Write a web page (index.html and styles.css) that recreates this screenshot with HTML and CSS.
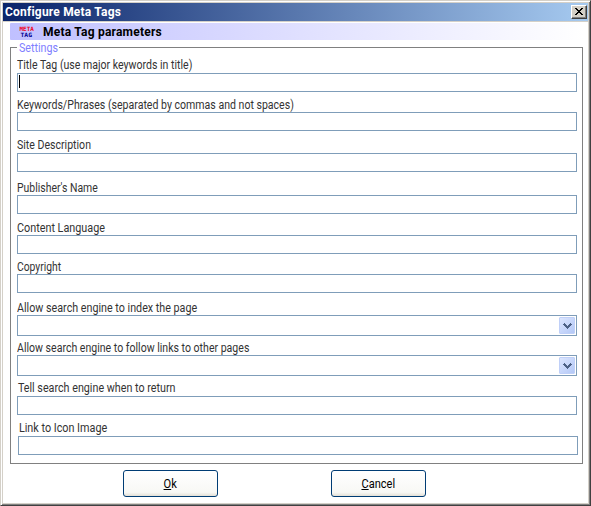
FILE: index.html
```
<!DOCTYPE html>
<html lang="en">
<head>
<meta charset="utf-8">
<title>Configure Meta Tags</title>
<link rel="stylesheet" href="styles.css">
</head>
<body>
<div class="window">
  <header class="titlebar">
    <span class="caption">Configure Meta Tags</span>
    <button class="close" aria-label="Close"><svg width="8" height="7" viewBox="0 0 8 7" shape-rendering="crispEdges"><path d="M0 0h2v1h1v1h2V1h1V0h2v1H7v1H6v1H5v1h1v1h1v1h1v1H6V6H5V5H3v1H2v1H0V6h1V5h1V4h1V3H2V2H1V1H0z"/></svg></button>
  </header>
  <div class="banner">
    <svg class="logo" width="16" height="12" viewBox="0 0 16 12">
      <text x="0.5" y="5" textLength="14.5" lengthAdjust="spacingAndGlyphs" fill="#f00018">META</text>
      <text x="1.5" y="11" textLength="11.5" lengthAdjust="spacingAndGlyphs" fill="#000090">TAG</text>
    </svg>
    <span class="heading">Meta Tag parameters</span>
  </div>
  <fieldset class="settings">
    <legend><span>Settings</span></legend>
    <div class="row title"><label>Title Tag (use major keywords in title)</label><div class="field"><i class="caret"></i></div></div>
    <div class="row keywords"><label>Keywords/Phrases (separated by commas and not spaces)</label><div class="field"></div></div>
    <div class="row description"><label>Site Description</label><div class="field"></div></div>
    <div class="row publisher"><label>Publisher's Name</label><div class="field"></div></div>
    <div class="row language"><label>Content Language</label><div class="field"></div></div>
    <div class="row copyright"><label>Copyright</label><div class="field"></div></div>
    <div class="row index"><label>Allow search engine to index the page</label><div class="field combo"><span class="drop"><svg width="9" height="6" viewBox="0 0 9 6" shape-rendering="crispEdges"><path d="M1 0h1v1h1v1h1v1h1V2h1V1h1V0h1v1h1v1H8v1H7v1H6v1H5v1H4V5H3V4H2V3H1V2H0V1h1z"/></svg></span></div></div>
    <div class="row follow"><label>Allow search engine to follow links to other pages</label><div class="field combo"><span class="drop"><svg width="9" height="6" viewBox="0 0 9 6" shape-rendering="crispEdges"><path d="M1 0h1v1h1v1h1v1h1V2h1V1h1V0h1v1h1v1H8v1H7v1H6v1H5v1H4V5H3V4H2V3H1V2H0V1h1z"/></svg></span></div></div>
    <div class="row return"><label>Tell search engine when to return</label><div class="field"></div></div>
    <div class="row icon"><label>Link to Icon Image</label><div class="field"></div></div>
  </fieldset>
  <footer class="actions">
    <button class="push"><span><u>O</u>k</span></button>
    <button class="push"><span><u>C</u>ancel</span></button>
  </footer>
</div>
</body>
</html>
```
FILE: styles.css
```
* { box-sizing: border-box; }
body { margin: 0; background: #fff; font: 12px/15px Roboto, "Liberation Sans", sans-serif; color: #333; }
button { font: inherit; padding: 0; }
.window {
  width: 591px; height: 506px; display: flex; flex-direction: column;
  border: 1px solid; border-color: #d4d0c8 #404040 #404040 #d4d0c8;
  box-shadow: inset 1px 1px #fff, inset -1px -1px #808080, inset 2px 2px #d4d0c8, inset -2px -2px #d4d0c8;
  padding: 2px 2px 0;
}
.titlebar {
  height: 19px; flex: none; display: flex; align-items: flex-start; justify-content: space-between;
  padding: 2px 2px 0; 
  border-bottom: 1px solid #d4d0c8;
  background: linear-gradient(90deg, #0a246a, #a6caf0);
}
.caption { color: #fff; font-weight: 700; letter-spacing: 0.2px; line-height: 15px; white-space: nowrap; }
.close {
  width: 16px; height: 14px; margin-right: -1px; display: grid; place-items: center; background: #d4d0c8;
  border: 1px solid; border-color: #fff #404040 #404040 #fff; box-shadow: inset -1px -1px #808080;
}
.close svg { display: block; margin: -1px 0 0 -1px; }
.banner {
  height: 17px; flex: none; margin: 1px 4px 0 7px; padding-left: 9px; display: flex; align-items: center;
  border-radius: 1px 0 0 1px; background: linear-gradient(90deg, #c0c0ff, #fff);
}
.logo { display: block; flex: none; font: 700 6px "DejaVu Sans Mono", monospace; }
.heading { margin: 2px 0 0 8px; color: #000; font-weight: 700; letter-spacing: 0.22px; white-space: nowrap; }
.settings {
  width: 573px; height: 424px; flex: none; margin: 0 0 0 7px; padding: 2px 6px 0;
  border: 1px solid #808080; display: flex; flex-direction: column;
  min-width: 0;
}
.settings legend { color: #8080ff; width: 42px; height: 15px; padding: 1px 0 0 2px; line-height: 15px; white-space: nowrap; }
.settings legend span { display: block; transform: scaleX(0.89); transform-origin: 0 0; }
.row { --fit: 0.88; width: 560px; flex: none; display: flex; flex-direction: column; }
.row label {
  height: 15px; line-height: 17px; white-space: nowrap;
  transform: scaleX(var(--fit)); transform-origin: 0 0;
}
.field { height: 19px; border: 1px solid #7f9db9; background: #fff; }
.title label, .description label, .return label, .icon label { margin-bottom: 1px; }
.keywords, .language, .copyright, .icon { margin-top: 5px; }
.description, .language { margin-top: 6px; }
.publisher { margin-top: 8px; --fit: 0.87; }
.language { --fit: 0.9; }
.copyright { --fit: 0.86; }
.index { margin-top: 7px; --fit: 0.894; }
.follow, .return { margin-top: 4px; }
.return { --fit: 0.895; }
.return label { padding-left: 1px; }
.icon { margin-left: 1px; --fit: 0.9; }
.icon label { padding-left: 1px; }
.caret { display: block; width: 1px; height: 13px; margin: 1px 0 0 1px; background: #000; }
.combo { height: 21px; display: flex; justify-content: flex-end; padding: 1px; }
.drop {
  width: 16px; height: 17px; display: grid; place-items: center; border-radius: 1px;
  border: 1px solid #c0d0f8; background: linear-gradient(135deg, #dce6ff, #b4c8f6);
}
.drop svg { display: block; fill: #4d6185; }
.actions { display: flex; gap: 113px; margin: 6px 0 0 120px; }
.push {
  width: 95px; height: 27px; border: 1px solid #003c74; border-radius: 3px; color: #000;
  background: linear-gradient(#fff, #f8f8f5 85%, #e4e0d6);
}
.push span { display: inline-block; transform: scaleX(0.92); padding-top: 2px; }
.push u { text-underline-offset: 1px; }
```
